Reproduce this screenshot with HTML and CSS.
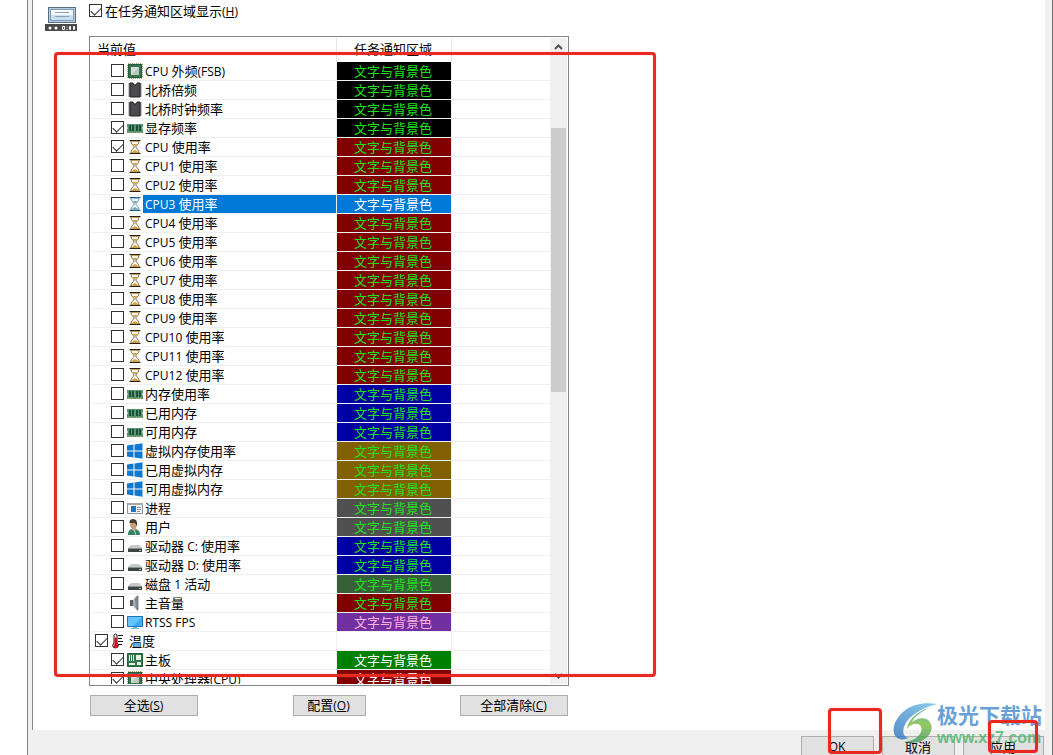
FILE: index.html
```html
<!DOCTYPE html>
<html lang="zh-CN">
<head>
<meta charset="utf-8">
<title>任务通知区域</title>
<link rel="stylesheet" href="styles.css">
</head>
<body>
<svg class="sprite" aria-hidden="true">
  <symbol id="cpu" viewBox="0 0 16 16"><rect x="1" y="1" width="14" height="14" fill="none" stroke="#a3a860" stroke-width="2" stroke-dasharray="1 1"/><rect x="1" y="1" width="14" height="14" fill="#357550"/><rect x="1.500" y="1.500" width="13" height="13" fill="none" stroke="#27593c"/><path d="M4 4h8v8H4z" fill="#d3ded7"/><path d="M12 4v8H4z" fill="#b9c9c0"/></symbol>
  <symbol id="chip" viewBox="0 0 16 16"><path d="M2.500 1.500v14M13.500 1.500v14" stroke="#222" stroke-width="2" stroke-dasharray="1 1"/><path d="M3 1h3q0 2 2 2t2-2h3v14H3z" fill="#4b4b4e" stroke="#222"/></symbol>
  <symbol id="ram" viewBox="0 0 16 16"><path d="M0 4h16v3l-1 1 1 1v4H0V9l1-1-1-1z" fill="#5a9673"/><path d="M2 5h2v6H2zM5 5h2v6H5zM9 5h2v6H9zM12 5h2v6h-2z" fill="#1c5238"/><path d="M1 12.500h6M9 12.500h6" stroke="#acac56" stroke-dasharray="1 1"/></symbol>
  <symbol id="glass" viewBox="0 0 16 16"><path d="M4 2h8c0 4-3 4-3 6s3 2 3 6H4c0-4 3-4 3-6S4 6 4 2z" fill="#fff8ea" stroke="#6b5f4c"/><path d="M5.500 5h5L8 7.600zM5 13.500c0-1 2-2 3-2.400 1 .4 3 1.400 3 2.400z" fill="#dba12e"/><path d="M2.500 1.500h11M2.500 14.500h11" stroke="#2a2117"/><path d="M3.500 2.500h9M3.500 13.500h9" stroke="#c99a4a" stroke-width=".7"/></symbol>
  <symbol id="glassblue" viewBox="0 0 16 16"><path d="M4 2h8c0 4-3 4-3 6s3 2 3 6H4c0-4 3-4 3-6S4 6 4 2z" fill="#edf7ff" stroke="#5c87a3"/><path d="M5.500 5h5L8 7.600zM5 13.500c0-1 2-2 3-2.400 1 .4 3 1.400 3 2.400z" fill="#78a4b0"/><path d="M2.500 1.500h11M2.500 14.500h11" stroke="#235f8d"/></symbol>
  <symbol id="win" viewBox="0 0 16 16"><path d="M0 2.600l6.500-1v6H0zM7.500 1.400L15.500.2v7.400h-8zM0 8.500h6.500v6L0 13.600zM7.500 8.500h8v7.200l-8-1.200z" fill="#0f78d1"/></symbol>
  <symbol id="process" viewBox="0 0 16 16"><path d="M.500 3.500h15v10H.500z" fill="#f4f6f7" stroke="#8c9295"/><path d="M0 3h16v2H0z" fill="#a4a9ac"/><path d="M4 6h5v6H4z" fill="#1877c7"/><path d="M10 7.500h4M10 9.500h4M10 11.500h3" stroke="#8595a0"/></symbol>
  <symbol id="user" viewBox="0 0 16 16"><path d="M1 16c0-5 2-6 5-6 4 0 7 1 7 6z" fill="#328365"/><path d="M5 8h4v3l-2 1-2-1z" fill="#d0a07c"/><ellipse cx="6.500" cy="5" rx="3.500" ry="4.500" fill="#c79c7b"/><path d="M2.500 4C2-1 9-1 10 3v4L8 4z" fill="#453c35"/><path d="M7 11l2 5" stroke="#b9d8ca"/></symbol>
  <symbol id="drive" viewBox="0 0 16 16"><path d="M4 7h8l3 3H1z" fill="#c6c8c9"/><path d="M1 10h14v4H1z" fill="#3f4445"/><path d="M1 10.500h14" stroke="#8a9092"/><path d="M12 12h2v1h-2z" fill="#78e878"/></symbol>
  <symbol id="speaker" viewBox="0 0 16 16"><path d="M3 5h3v6H3z" fill="#5e6265"/><path d="M6 5l5-5v16l-5-5z" fill="#a9afb3"/><path d="M8 3l3-3v16l-2-2z" fill="#7d868c"/><path d="M11.500 1v14" stroke="#bcc2c7"/></symbol>
  <symbol id="screen" viewBox="0 0 16 16"><path d="M.500 2.500h15v10H.500z" fill="#3eaef4" stroke="#1677b9"/><path d="M1 3h14L6 12H1z" fill="#67c4fb"/><path d="M6 13h4v1h2v1H4v-1h2z" fill="#77b6d4"/></symbol>
  <symbol id="temp" viewBox="0 0 16 16"><path d="M3 2q1.500-2 3 0v8q2 2 1 4-2.500 2-5 0-1-2 1-4z" fill="#fff" stroke="#271717"/><path d="M4 5h1.500v6L7 13l-2 2-2-2 1-2z" fill="#d1131b" stroke="#d1131b"/><path d="M7 2.500h5M7 5.500h4M7 8.500h5M7 11.500h4" stroke="#171717"/></symbol>
  <symbol id="board" viewBox="0 0 16 16"><path d="M.500 1.500h15v13H.500z" fill="#37754a" stroke="#205e37"/><path d="M2 3h1v6H2zM4 3h1v6H4zM6 3h1v6H6zM9 3h5v5H9zM2 11h6v2H2zM10 10h4v3h-4z" fill="#e3f0e6"/></symbol>
</svg>

<main class="dialog">
  <section class="sheet">
    <svg class="device" viewBox="0 0 32 26" aria-hidden="true"><rect x="3.500" y="1.500" width="27" height="15" fill="#b5cbe0" stroke="#5b6f82"/><rect x="5.500" y="3.500" width="23" height="11" fill="#f8fbfd" stroke="#7f9db8"/><path d="M6 9h22v5H6z" fill="#c4e0f1"/><path d="M10 6.500h14M10 10.500h14" stroke="#8f9fac"/><path d="M0 18h32v7H0z" fill="#4a4a4a"/><circle cx="5" cy="22" r="1.500" fill="#fff"/><circle cx="11" cy="22" r="1.500" fill="#fff"/><path d="M17.500 20.500h2v3h-2zM24.500 20.500h1v3h-1zM28.500 20.500h1v3h-1z" fill="none" stroke="#fff"/><path d="M22 20.500v1M22 23v1" stroke="#fff"/></svg>
    <div class="panel">
      <label class="show"><input type="checkbox" checked><span>在任务通知区域显示<span class="en">(<u>H</u>)</span></span></label>
      <div class="list">
        <div class="viewport">
          <table>
            <colgroup><col class="c-name"><col class="c-tray"><col></colgroup>
            <thead><tr><th scope="col">当前值</th><th scope="col" class="mid">任务通知区域</th><th></th></tr></thead>
            <tbody>
              <tr><td><label><input type="checkbox"><svg><use href="#cpu"/></svg><span><span class="en">CPU</span> 外频<span class="en">(FSB)</span></span></label></td><td class="sw black">文字与背景色</td><td></td></tr>
              <tr><td><label><input type="checkbox"><svg><use href="#chip"/></svg><span>北桥倍频</span></label></td><td class="sw black">文字与背景色</td><td></td></tr>
              <tr><td><label><input type="checkbox"><svg><use href="#chip"/></svg><span>北桥时钟频率</span></label></td><td class="sw black">文字与背景色</td><td></td></tr>
              <tr><td><label><input type="checkbox" checked><svg><use href="#ram"/></svg><span>显存频率</span></label></td><td class="sw black">文字与背景色</td><td></td></tr>
              <tr><td><label><input type="checkbox" checked><svg><use href="#glass"/></svg><span><span class="en">CPU </span>使用率</span></label></td><td class="sw maroon">文字与背景色</td><td></td></tr>
              <tr><td><label><input type="checkbox"><svg><use href="#glass"/></svg><span><span class="en">CPU1 </span>使用率</span></label></td><td class="sw maroon">文字与背景色</td><td></td></tr>
              <tr><td><label><input type="checkbox"><svg><use href="#glass"/></svg><span><span class="en">CPU2 </span>使用率</span></label></td><td class="sw maroon">文字与背景色</td><td></td></tr>
              <tr class="selected"><td><label><input type="checkbox"><svg><use href="#glassblue"/></svg><span><span class="en">CPU3 </span>使用率</span></label></td><td class="sw blue">文字与背景色</td><td></td></tr>
              <tr><td><label><input type="checkbox"><svg><use href="#glass"/></svg><span><span class="en">CPU4 </span>使用率</span></label></td><td class="sw maroon">文字与背景色</td><td></td></tr>
              <tr><td><label><input type="checkbox"><svg><use href="#glass"/></svg><span><span class="en">CPU5 </span>使用率</span></label></td><td class="sw maroon">文字与背景色</td><td></td></tr>
              <tr><td><label><input type="checkbox"><svg><use href="#glass"/></svg><span><span class="en">CPU6 </span>使用率</span></label></td><td class="sw maroon">文字与背景色</td><td></td></tr>
              <tr><td><label><input type="checkbox"><svg><use href="#glass"/></svg><span><span class="en">CPU7 </span>使用率</span></label></td><td class="sw maroon">文字与背景色</td><td></td></tr>
              <tr><td><label><input type="checkbox"><svg><use href="#glass"/></svg><span><span class="en">CPU8 </span>使用率</span></label></td><td class="sw maroon">文字与背景色</td><td></td></tr>
              <tr><td><label><input type="checkbox"><svg><use href="#glass"/></svg><span><span class="en">CPU9 </span>使用率</span></label></td><td class="sw maroon">文字与背景色</td><td></td></tr>
              <tr><td><label><input type="checkbox"><svg><use href="#glass"/></svg><span><span class="en">CPU10 </span>使用率</span></label></td><td class="sw maroon">文字与背景色</td><td></td></tr>
              <tr><td><label><input type="checkbox"><svg><use href="#glass"/></svg><span><span class="en">CPU11 </span>使用率</span></label></td><td class="sw maroon">文字与背景色</td><td></td></tr>
              <tr><td><label><input type="checkbox"><svg><use href="#glass"/></svg><span><span class="en">CPU12 </span>使用率</span></label></td><td class="sw maroon">文字与背景色</td><td></td></tr>
              <tr><td><label><input type="checkbox"><svg><use href="#ram"/></svg><span>内存使用率</span></label></td><td class="sw navy">文字与背景色</td><td></td></tr>
              <tr><td><label><input type="checkbox"><svg><use href="#ram"/></svg><span>已用内存</span></label></td><td class="sw navy">文字与背景色</td><td></td></tr>
              <tr><td><label><input type="checkbox"><svg><use href="#ram"/></svg><span>可用内存</span></label></td><td class="sw navy">文字与背景色</td><td></td></tr>
              <tr><td><label><input type="checkbox"><svg><use href="#win"/></svg><span>虚拟内存使用率</span></label></td><td class="sw brown">文字与背景色</td><td></td></tr>
              <tr><td><label><input type="checkbox"><svg><use href="#win"/></svg><span>已用虚拟内存</span></label></td><td class="sw brown">文字与背景色</td><td></td></tr>
              <tr><td><label><input type="checkbox"><svg><use href="#win"/></svg><span>可用虚拟内存</span></label></td><td class="sw brown">文字与背景色</td><td></td></tr>
              <tr><td><label><input type="checkbox"><svg><use href="#process"/></svg><span>进程</span></label></td><td class="sw gray">文字与背景色</td><td></td></tr>
              <tr><td><label><input type="checkbox"><svg><use href="#user"/></svg><span>用户</span></label></td><td class="sw gray">文字与背景色</td><td></td></tr>
              <tr><td><label><input type="checkbox"><svg><use href="#drive"/></svg><span>驱动器<span class="en"> C: </span>使用率</span></label></td><td class="sw navy">文字与背景色</td><td></td></tr>
              <tr><td><label><input type="checkbox"><svg><use href="#drive"/></svg><span>驱动器<span class="en"> D: </span>使用率</span></label></td><td class="sw navy">文字与背景色</td><td></td></tr>
              <tr><td><label><input type="checkbox"><svg><use href="#drive"/></svg><span>磁盘<span class="en"> 1 </span>活动</span></label></td><td class="sw forest">文字与背景色</td><td></td></tr>
              <tr><td><label><input type="checkbox"><svg><use href="#speaker"/></svg><span>主音量</span></label></td><td class="sw maroon">文字与背景色</td><td></td></tr>
              <tr><td><label><input type="checkbox"><svg><use href="#screen"/></svg><span><span class="en">RTSS FPS</span></span></label></td><td class="sw purple">文字与背景色</td><td></td></tr>
              <tr class="group"><td><label><input type="checkbox" checked><svg><use href="#temp"/></svg><span>温度</span></label></td><td></td><td></td></tr>
              <tr><td><label><input type="checkbox" checked><svg><use href="#board"/></svg><span>主板</span></label></td><td class="sw green">文字与背景色</td><td></td></tr>
              <tr><td><label><input type="checkbox" checked><svg><use href="#cpu"/></svg><span>中央处理器<span class="en">(CPU)</span></span></label></td><td class="sw wine">文字与背景色</td><td></td></tr>
            </tbody>
          </table>
        </div>
        <div class="scrollbar">
          <button type="button" aria-label="向上滚动"><svg viewBox="0 0 9 6"><path d="M1 5l3.500-3.500L8 5" fill="none" stroke="#505050" stroke-width="2"/></svg></button>
          <div class="track"><div class="thumb"></div></div>
          <button type="button" aria-label="向下滚动"><svg viewBox="0 0 9 6"><path d="M1 1l3.500 3.500L8 1" fill="none" stroke="#505050" stroke-width="2"/></svg></button>
        </div>
      </div>
      <div class="actions">
        <button type="button" class="btn wide">全选<span class="en">(<u>S</u>)</span></button>
        <button type="button" class="btn">配置<span class="en">(<u>O</u>)</span></button>
        <button type="button" class="btn wide">全部清除<span class="en">(<u>C</u>)</span></button>
      </div>
    </div>
  </section>
  <footer>
    <button type="button" class="btn"><span class="en">OK</span></button>
    <button type="button" class="btn">取消</button>
    <button type="button" class="btn apply">应用</button>
  </footer>
</main>

<div class="watermark">
  <svg viewBox="0 0 44 42" aria-hidden="true">
    <defs>
      <linearGradient id="wb" x1="0" y1="1" x2="1" y2="0"><stop offset="0" stop-color="#2f72bd"/><stop offset="1" stop-color="#6fc0ea"/></linearGradient>
      <linearGradient id="wg" x1="0" y1="0" x2="0" y2="1"><stop offset="0" stop-color="#3fa9a0"/><stop offset=".5" stop-color="#7dbb3a"/><stop offset="1" stop-color="#3f9a6a"/></linearGradient>
    </defs>
    <path d="M44 2C32 0 19 2 10 10 1 18-2 29 3 35c3 3 8 3 13 1-5-1-7-5-5-11C15 14 28 6 44 2z" fill="url(#wb)"/>
    <path d="M39 5c-9 3-17 9-20 15 5-4 12-5 16-2 5 4 5 12-1 17-6 6-15 7-23 5 9-1 15-5 17-10 2-6-2-9-7-8-3 1-5 2-7 5C15 17 26 8 39 5z" fill="url(#wg)"/>
  </svg>
  <div><div class="wm-name">极光下载站</div><div class="wm-url">www.xz7.com</div></div>
</div>
<div class="mark mark-list"></div>
<div class="mark mark-ok"></div>
<div class="mark mark-apply"></div>
</body>
</html>
```
FILE: styles.css
```css
* { box-sizing: border-box; }

body {
  position: relative;
  height: 100vh;
  margin: 0;
  padding-left: 27px;
  overflow: hidden;
  background: #fff;
  color: #000;
  font: 13px/17px "Noto Sans CJK SC", sans-serif;
}

button, input { margin: 0; font: inherit; color: inherit; }
.en { font-family: "Open Sans", "Noto Sans", sans-serif; font-size: 12px; }
.sprite { position: absolute; width: 0; height: 0; }

.dialog {
  display: flex;
  flex-direction: column;
  height: 100%;
  padding: 0 7px 0 4px;
  background: #f0f0f0;
  border-left: 1px solid #808080;
  border-right: 1px solid #707070;
}

.sheet {
  display: flex;
  flex: 1;
  gap: 12px;
  min-height: 0;
  padding: 0 12px 14px;
  background: #fff;
  border-left: 1px solid #8c8c8c;
}

.device { flex: none; width: 32px; height: 26px; margin-top: 6px; }

.panel { display: flex; flex: 1; flex-direction: column; max-width: 480px; min-height: 0; }

label { display: flex; align-items: center; white-space: nowrap; }
.show { height: 36px; padding-bottom: 15px; gap: 3px; }

input[type="checkbox"] {
  appearance: none;
  flex: none;
  width: 13px;
  height: 13px;
  background: #fff;
  border: 1px solid #333;
}
input[type="checkbox"]:checked::after {
  content: "";
  display: block;
  width: 9px;
  height: 5px;
  margin: 2px 0 0 1px;
  border: solid #333;
  border-width: 0 0 1px 1px;
  transform: rotate(-45deg);
}

.list {
  display: flex;
  flex: 1;
  min-height: 0;
  padding: 1px;
  border: 1px solid #828790;
}
.viewport { flex: 1; overflow: hidden; }

table { width: 100%; table-layout: fixed; border-collapse: separate; border-spacing: 0; }
.c-name { width: 246px; }
.c-tray { width: 115px; }
th {
  height: 24px;
  padding: 0 0 3px 6px;
  border-right: 1px solid #e5e5e5;
  font-weight: 400;
  text-align: left;
}
th.mid { padding: 0 2px 3px 0; text-align: center; }
th:last-child, td:last-child { border-right: 0; }
td {
  height: 19px;
  padding: 0;
  border-right: 1px solid #f0f0f0;
  border-bottom: 1px solid #f0f0f0;
}

td label { height: 18px; padding-left: 20px; }
td label input[type="checkbox"] { margin-bottom: 1px; }
td label svg { flex: none; width: 16px; height: 16px; margin-left: 3px; }
td label > span { flex: 1; height: 18px; padding-left: 2px; }
.group td label { padding-left: 4px; }
.selected td label > span { background: #0078d7; color: #fff; }

.sw { padding: 0 2px 1px 0; background-clip: padding-box; color: #1fe01f; text-align: center; }
.black { background-color: #000; }
.maroon { background-color: #800000; }
.navy { background-color: #0000a0; }
.brown { background-color: #806000; }
.gray { background-color: #505050; }
.forest { background-color: #386038; }
.blue { background-color: #0078d7; color: #fff; }
.purple { background-color: #7030a0; color: #ffb0e0; }
.green { background-color: #008000; color: #fff; }
.wine { background-color: #800000; color: #fff; }

.scrollbar { display: flex; flex-direction: column; width: 17px; background: #f0f0f0; }
.scrollbar button {
  display: flex;
  align-items: center;
  justify-content: center;
  height: 17px;
  padding: 0;
  background: none;
  border: 0;
}
.scrollbar svg { width: 9px; height: 6px; }
.track { flex: 1; display: grid; grid-template-rows: 12% 43%; }
.thumb { grid-row: 2; margin: 0 1px; background: #cdcdcd; }

.actions { display: flex; justify-content: space-between; padding: 9px 1px 0; }
.btn {
  flex: none;
  width: 73px;
  height: 21px;
  padding: 0 1px 1px 0;
  background: #e1e1e1;
  border: 1px solid #adadad;
  line-height: 17px;
}
.wide { width: 108px; }
.apply { width: 81px; }

footer {
  display: flex;
  flex: none;
  justify-content: flex-end;
  gap: 8px;
  height: 25px;
  padding: 6px 1px 0 0;
}

.mark {
  position: absolute;
  border: 3px solid #e8291f;
  border-radius: 4px;
  box-shadow: 0 0 1px #ff8a80, inset 0 0 1px #ff8a80;
  pointer-events: none;
}
.mark-list { top: 52px; left: 54px; width: 602px; height: 625px; }
.mark-ok { right: 171px; bottom: 1px; width: 54px; height: 46px; }
.mark-apply { right: 15px; bottom: 2px; width: 50px; height: 33px; }

.watermark {
  position: absolute;
  right: 11px;
  bottom: 6px;
  display: flex;
  opacity: .8;
  pointer-events: none;
}
.watermark svg { width: 44px; height: 42px; }
.wm-name { color: #4489cc; font-size: 21px; font-weight: 700; line-height: 25px; }
.wm-url { color: #4fb36c; font: bold 16px/22px "Liberation Sans", sans-serif; }
```
